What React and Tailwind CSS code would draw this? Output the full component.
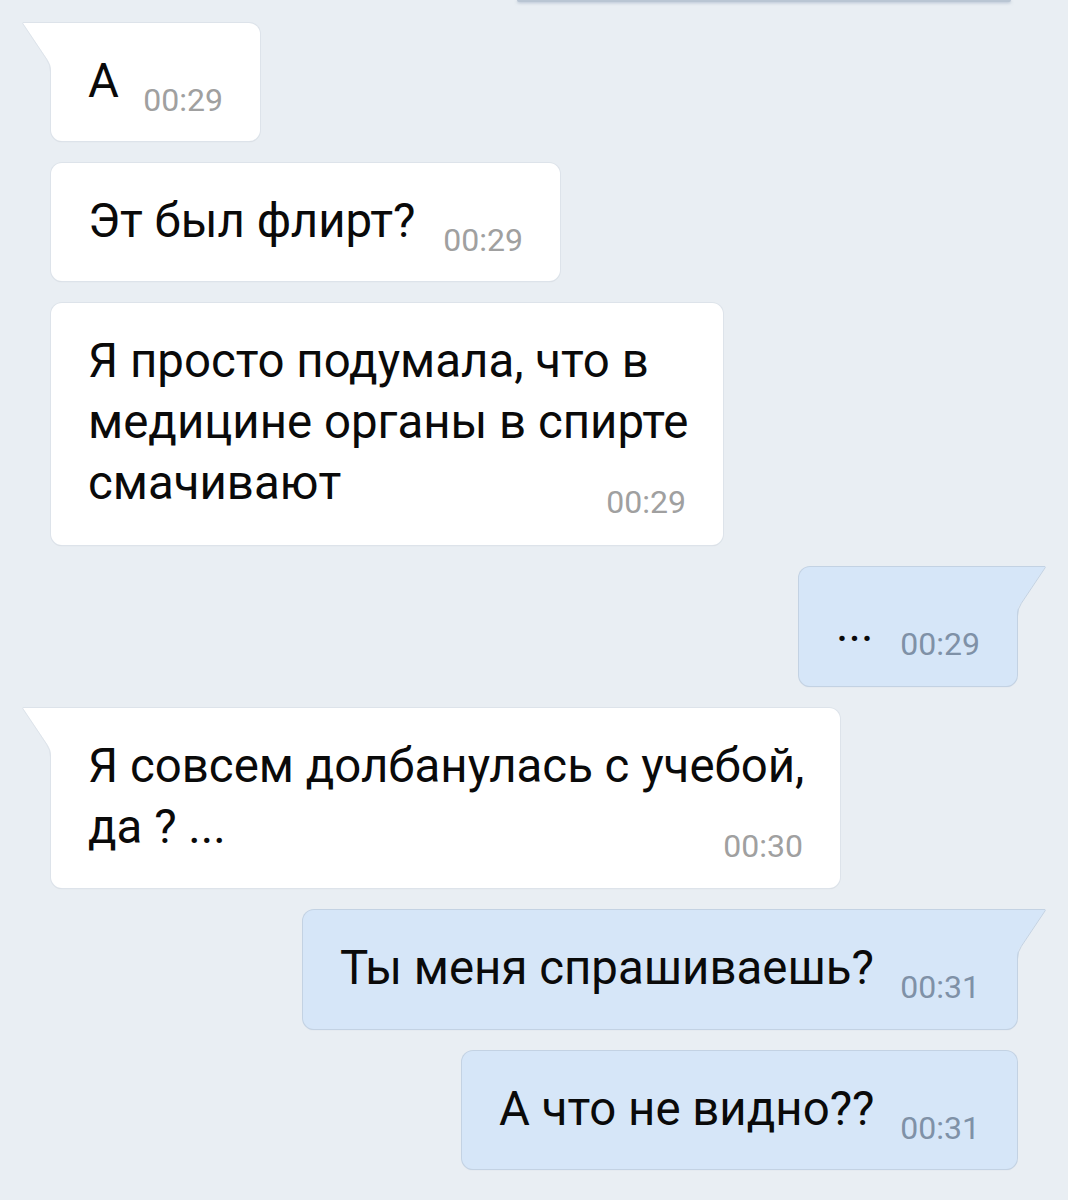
import React from "react";

const messages = [
  { id: 1, out: false, tail: true, w: "w-[209px]", h: "h-[118px]", lines: ["А"], time: "00:29" },
  { id: 2, out: false, tail: false, w: "w-[509px]", h: "h-[118px]", lines: ["Эт был флирт?"], time: "00:29" },
  {
    id: 3,
    out: false,
    tail: false,
    w: "w-[672px]",
    h: "h-[242px]",
    lines: ["Я просто подумала, что в", "медицине органы в спирте", "смачивают"],
    time: "00:29",
  },
  { id: 4, out: true, tail: true, w: "w-[218px]", h: "h-[119px]", lines: ["..."], time: "00:29" },
  {
    id: 5,
    out: false,
    tail: true,
    w: "w-[789px]",
    h: "h-[180px]",
    lines: ["Я совсем долбанулась с учебой,", "да ? ..."],
    time: "00:30",
  },
  { id: 6, out: true, tail: true, w: "w-[714px]", h: "h-[119px]", lines: ["Ты меня спрашиваешь?"], time: "00:31" },
  { id: 7, out: true, tail: false, w: "w-[555px]", h: "h-[118px]", lines: ["А что не видно??"], time: "00:31" },
];

function Tail({ out }) {
  const fill = out ? "#d6e6f8" : "#ffffff";
  const stroke = out ? "#c3d2e3" : "#dde3ea";
  return (
    <svg
      width="32"
      height="58"
      viewBox="0 0 32 58"
      className={`absolute -top-px ${out ? "-right-[29px] -scale-x-100" : "-left-[29px]"}`}
    >
      <path d="M1 1 L32 1 L32 58 L29 58 L29 50 Q29 42 25 37 L1.6 2.2 Q1 1.2 1 1 Z" fill={fill} />
      <path d="M32 0.5 L1 0.5 Q0.2 0.8 0.9 1.8 L24.6 37.2 Q28.5 42.5 28.5 50 L28.5 58" fill="none" stroke={stroke} strokeWidth="1" />
    </svg>
  );
}

function Bubble({ m }) {
  const last = m.lines.length - 1;
  return (
    <div className={`flex ${m.out ? "justify-end pr-[51px]" : "justify-start pl-[51px]"}`}>
      <div
        className={`relative ${m.w} ${m.h} rounded-[11px] px-[37px] pt-[28px] ${
          m.out
            ? "bg-[#d6e6f8] ring-1 ring-[#c3d2e3] shadow-[0_1px_1px_rgba(90,110,140,0.25)]"
            : "bg-white ring-1 ring-[#dde3ea] shadow-[0_1px_1px_rgba(0,0,0,0.12)]"
        } ${m.tail ? (m.out ? "rounded-tr-none" : "rounded-tl-none") : ""}`}
      >
        {m.tail && <Tail out={m.out} />}
        {m.lines.map((line, i) =>
          i < last ? (
            <div key={i} className="whitespace-nowrap text-[47.4px] leading-[61px] text-[#0a0a0a]">
              {line}
            </div>
          ) : (
            <div key={i} className="flex items-baseline justify-between gap-6">
              <span className="whitespace-nowrap text-[47.4px] leading-[61px] text-[#0a0a0a]">{line}</span>
              <span
                className={`translate-y-[14px] whitespace-nowrap text-[32px] leading-none ${
                  m.out ? "text-[#7f91a7]" : "text-[#a0a0a0]"
                }`}
              >
                {m.time}
              </span>
            </div>
          )
        )}
      </div>
    </div>
  );
}

export default function App() {
  return (
    <div className="min-h-[1200px] w-[1068px] overflow-hidden bg-[#e9eef3] font-['Roboto',sans-serif]">
      <div className="flex justify-end pr-[57px]">
        <div className="h-[2px] w-[494px] rounded-b-[4px] bg-[#b9c5d3] shadow-[0_1px_3px_rgba(120,140,170,0.5)]" />
      </div>
      <div className="mt-[21px] flex flex-col gap-[22px]">
        {messages.map((m) => (
          <Bubble key={m.id} m={m} />
        ))}
      </div>
    </div>
  );
}
